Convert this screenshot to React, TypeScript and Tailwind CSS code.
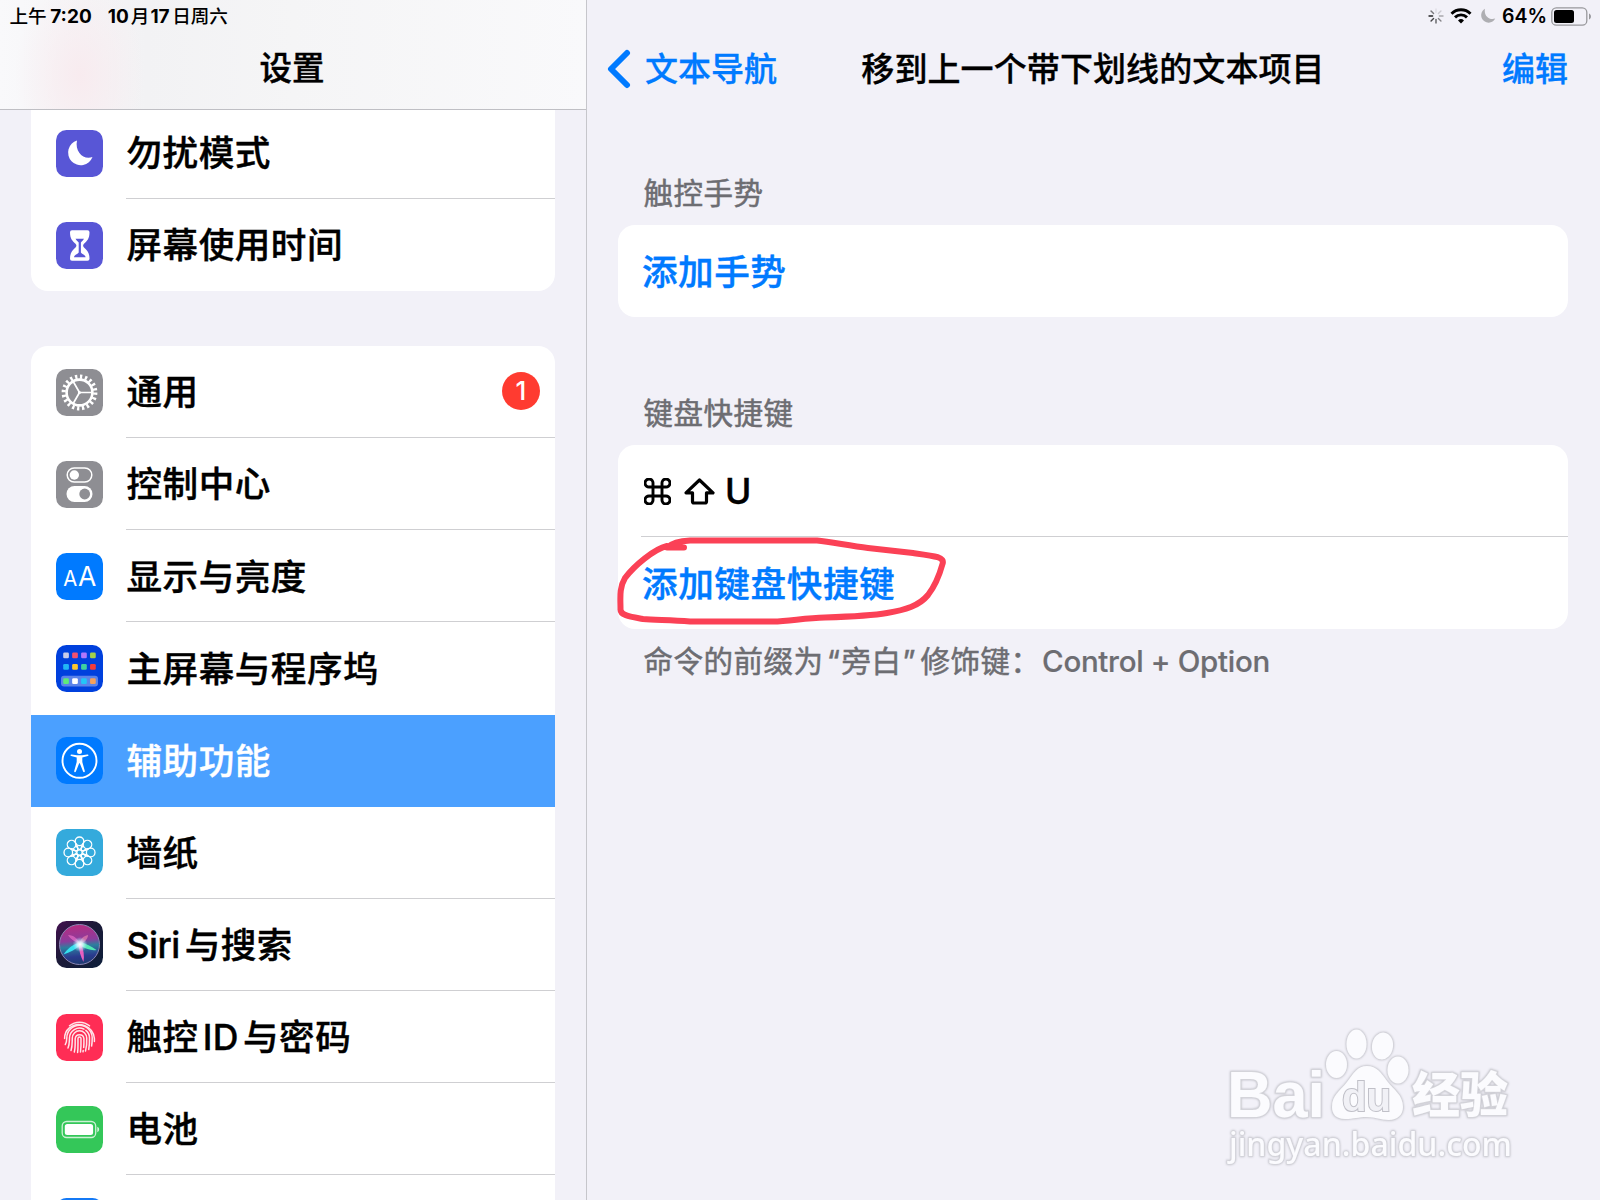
import type { ReactNode } from "react";

const PETALS = [0, 45, 90, 135, 180, 225, 270, 315];

function Tile({ color, children }: { color: string; children?: ReactNode }) {
  return (
    <svg viewBox="0 0 47 47" className="block size-[47px] shrink-0">
      <rect width="47" height="47" rx="10.5" fill={color} />
      {children}
    </svg>
  );
}

function MoonTile() {
  return (
    <Tile color="#5856d6">
      <path d="M21 10.5A12.6 12.6 0 1 0 36.5 27C28 30.500 18.500 22 21 10.500Z" fill="#fff" />
    </Tile>
  );
}

function HourglassTile() {
  return (
    <Tile color="#5856d6">
      <path
        d="M16 8.300h15.500a2 2 0 0 1 2 2c0 6.500-2.500 8.700-5.500 11.400-1.200 1.100-1.200 2.600 0 3.700 3 2.700 5.500 5 5.500 11.400a2 2 0 0 1-2 2H16a2 2 0 0 1-2-2c0-6.400 2.500-8.700 5.500-11.400 1.200-1.100 1.200-2.600 0-3.700-3-2.700-5.500-4.900-5.500-11.400a2 2 0 0 1 2-2Z"
        fill="#fff"
      />
      <path
        d="M19.500 16.800h8.500c-.8 1.600-2 2.600-3.100 3.600v10.200c1.100 2 4.400 1.800 4.700 4.600H18c.3-2.800 3.600-2.600 4.700-4.600V20.400c-1.200-1-2.400-2-3.200-3.600Z"
        fill="#5856d6"
      />
    </Tile>
  );
}

function GearTile() {
  return (
    <Tile color="#8e8e93">
      <g fill="none" stroke="#fff">
        <circle cx="23.500" cy="23.500" r="12.900" strokeWidth="2.600" />
        <circle cx="23.500" cy="23.500" r="15.800" strokeWidth="4.200" strokeDasharray="2.300 2.664" />
        <path d="M23.500 23.500h12.500M23.500 23.500l-6.300-11M23.500 23.500l-6.300 11" strokeWidth="1.700" />
      </g>
      <circle cx="23.500" cy="23.500" r="1.500" fill="#fff" />
    </Tile>
  );
}

function ControlTile() {
  return (
    <Tile color="#8e8e93">
      <rect x="11.200" y="7" width="24.600" height="14" rx="7" fill="none" stroke="#fff" strokeWidth="1.500" />
      <circle cx="18.300" cy="14" r="4.700" fill="#fff" />
      <rect x="10.500" y="25" width="26" height="16" rx="8" fill="#fff" />
      <circle cx="28.700" cy="33" r="5.400" fill="#8e8e93" />
    </Tile>
  );
}

function DisplayTile() {
  return (
    <Tile color="#007aff">
      <g fill="#fff" fontFamily="Inter, sans-serif" fontWeight="400">
        <text x="7.300" y="33" fontSize="21.500" textLength="14" lengthAdjust="spacingAndGlyphs">
          A
        </text>
        <text x="21.900" y="33" fontSize="27.500" textLength="18.300" lengthAdjust="spacingAndGlyphs">
          A
        </text>
      </g>
    </Tile>
  );
}

function HomeTile() {
  const rows = [
    { y: 7.5, c: ["#c9cbe8", "#f2506e", "#b176fb", "#a4d04a"] },
    { y: 19, c: ["#21b5f5", "#fdc72e", "#3fd0a0", "#f23b3b"] },
    { y: 33.3, c: ["#5eea78", "#ffffff", "#22c5f8", "#f5a05a"] },
  ];
  return (
    <Tile color="#0040dd">
      <rect x="5" y="30.800" width="37" height="10.800" rx="3" fill="#5b83ea" />
      {rows.map((r) =>
        r.c.map((c, i) => <rect key={c} x={7.200 + i * 8.950} y={r.y} width="5.700" height="5.700" rx="1.300" fill={c} />),
      )}
    </Tile>
  );
}

function AccessTile() {
  return (
    <Tile color="#007aff">
      <circle cx="23.500" cy="23.800" r="17" fill="none" stroke="#fff" strokeWidth="1.900" />
      <circle cx="23.500" cy="14.600" r="2.500" fill="#fff" />
      <path
        d="M15.500 17.500l5.500.8h5l5.500-.8c1.100-.1 1.400 1.300.3 1.600l-5.500 1.300v4.600l2.500 9c.3 1.200-1.200 1.700-1.700.5l-3.300-8.200h-.6l-3.300 8.200c-.5 1.200-2 .7-1.700-.5l2.500-9v-4.600l-5.500-1.300c-1.100-.3-.8-1.700.3-1.600Z"
        fill="#fff"
      />
    </Tile>
  );
}

function FlowerTile() {
  return (
    <Tile color="#34aadc">
      <g fill="none" stroke="#fff" strokeWidth="1.300">
        {PETALS.map((a) => (
          <g key={a} transform={`rotate(${a} 23.5 23.5)`}>
            <circle cx="23.500" cy="12.300" r="4.300" />
            <path d="M23.500 20.600C21 19.400 20 17.800 19.700 14.500M23.500 20.600C26 19.400 27 17.800 27.300 14.500" />
          </g>
        ))}
        <circle cx="23.500" cy="23.500" r="2.700" />
      </g>
    </Tile>
  );
}

function SiriTile() {
  return (
    <svg viewBox="0 0 47 47" className="block size-[47px] shrink-0">
      <defs>
        <linearGradient id="siriBg" x1="0" y1="0" x2="1" y2="1">
          <stop offset="0" stopColor="#43104f" />
          <stop offset=".45" stopColor="#1c1a38" />
          <stop offset="1" stopColor="#0d1f3a" />
        </linearGradient>
        <linearGradient id="siriOrb" x1=".4" y1="0" x2=".5" y2="1">
          <stop offset="0" stopColor="#b82c80" />
          <stop offset=".4" stopColor="#8b3c9c" />
          <stop offset=".55" stopColor="#2c7f9e" />
          <stop offset=".8" stopColor="#2a3a8e" />
          <stop offset="1" stopColor="#1c3a6e" />
        </linearGradient>
        <radialGradient id="siriCore">
          <stop offset="0" stopColor="#fff" />
          <stop offset=".4" stopColor="#e6f4ff" stopOpacity=".8" />
          <stop offset="1" stopColor="#9fe0ff" stopOpacity="0" />
        </radialGradient>
      </defs>
      <rect width="47" height="47" rx="10.500" fill="url(#siriBg)" />
      <circle cx="23.500" cy="23.500" r="20" fill="url(#siriOrb)" stroke="#8c86b4" strokeWidth="1" />
      <path d="M24 21.500C17 23 11 28 7.500 33.500c6-2 12-5 17.500-9.500Z" fill="#35e0ee" />
      <path d="M24 21c5 1.500 11 4 16.500 8-5 .8-12-1-16.500-5Z" fill="#52e8b4" />
      <path d="M23 23c-.5 6 1.500 12 4.500 18 1-7 0-13-2.500-18Z" fill="#e85fc0" />
      <path d="M24 23c-4-2-9-4-12-9 6 0 10 4 12 9Z" fill="#e86cc8" opacity=".7" />
      <path d="M24 23c0-5 3-8 8-9 0 4-4 8-8 9Z" fill="#f58ab0" opacity=".6" />
      <circle cx="24" cy="23.500" r="7.500" fill="url(#siriCore)" />
    </svg>
  );
}

function TouchTile() {
  return (
    <Tile color="#ff2d55">
      <g fill="none" stroke="#fff" strokeWidth="1.500" strokeLinecap="round" opacity=".88">
        <path d="M13.500 11.800a15.500 15.500 0 0 1 20 0" />
        <path d="M8.600 24.500c0-4.500 1.700-8 4.500-10.300a15.500 15.500 0 0 1 25.300 10.300v3" />
        <path d="M9.300 30.500c1.300-2 1.400-4 1.500-6.500a12.700 12.700 0 0 1 25.400 0c0 3 0 5-.6 8" />
        <path d="M12 34c1.600-3.500 1.300-6.500 1.500-10a10 10 0 0 1 14.500-8.800M29.800 16.400a10 10 0 0 1 3.700 8.100c.1 4-.1 7.500-.8 11" />
        <path d="M15 36.500c1.500-4.300 1.100-8 1.300-12.500a7.200 7.200 0 0 1 14.400 0c.2 4.500 0 9-1.200 13" />
        <path d="M18.300 38c1.200-4.500.8-9 .9-13.500a4.400 4.400 0 0 1 8.700 0c.1 3.500.1 6-.2 9M27.200 36.500l-.2 1.300" />
        <path d="M21.600 38.500c.6-4.500.3-9 .4-14a1.500 1.500 0 0 1 3 0c.1 4.500.1 9-.5 13.500" />
      </g>
    </Tile>
  );
}

function BatteryTile() {
  return (
    <Tile color="#34c759">
      <rect x="6.200" y="15.500" width="33.500" height="16" rx="4.500" fill="none" stroke="#fff" strokeOpacity=".75" strokeWidth="1.300" />
      <rect x="8.800" y="18" width="28.300" height="11" rx="2.500" fill="#fff" />
      <path d="M41.300 20.800c2.400.8 2.400 4.600 0 5.400Z" fill="#fff" fillOpacity=".8" />
    </Tile>
  );
}

function Row({
  icon,
  label,
  badge,
  active,
  line = true,
}: {
  icon: ReactNode;
  label: ReactNode;
  badge?: string;
  active?: boolean;
  line?: boolean;
}) {
  return (
    <div className={`flex h-[92.15px] shrink-0 items-center pl-[25px] ${active ? "bg-[#4ba0ff] text-white" : ""}`}>
      {icon}
      <div
        className={`ml-[23px] flex h-full flex-1 items-center justify-between border-b pr-[15px] ${
          line ? "border-[#cfcfd2]" : "border-transparent"
        }`}
      >
        <span className="pt-[3px] pl-[0.5px] text-[35.600px] leading-none font-medium tracking-[0.5px] [-webkit-text-stroke:0.4px]">
          {label}
        </span>
        {badge && (
          <span className="mb-px flex size-[38px] items-center justify-center rounded-full bg-[#ff3b30] text-[26px] leading-none font-medium text-white">
            {badge}
          </span>
        )}
      </div>
    </div>
  );
}

function Sidebar() {
  return (
    <aside className="flex h-full w-[587px] shrink-0 flex-col border-r border-[#c6c6cb]">
      <header className="flex h-[110px] shrink-0 flex-col border-b border-[#bfbfc4] bg-[radial-gradient(ellipse_65px_100px_at_80px_75px,#f8ebef_0%,rgba(248,235,239,0)_100%),linear-gradient(90deg,#f9f9fb_0%,#f2f2f4_25%,#f5f5f6_50%,#f9f9fb_100%)]">
        <div className="flex h-8 items-center pl-[9.500px] text-[18.600px] leading-none font-medium">
          <span>上午</span>
          <span className="ml-[3.500px] text-[19px] font-bold">7:20</span>
          <span className="ml-[16px] text-[19px] font-bold">10</span>
          <span className="ml-[2px]">月</span>
          <span className="ml-[1px] text-[19px] font-bold">17</span>
          <span className="ml-[2.500px]">日周六</span>
        </div>
        <h1 className="flex h-[74px] items-center justify-center pt-px pr-[2px] text-[32.500px] leading-none font-medium [-webkit-text-stroke:0.4px]">
          设置
        </h1>
      </header>
      <div className="flex min-h-0 flex-1 flex-col overflow-hidden pr-[31px] pl-[31px]">
        <div className="-mt-[3.500px] flex shrink-0 flex-col rounded-b-[17px] bg-white pt-[0.500px]">
          <Row icon={<MoonTile />} label="勿扰模式" />
          <Row icon={<HourglassTile />} label="屏幕使用时间" line={false} />
        </div>
        <div className="mt-[54.700px] flex shrink-0 flex-col overflow-hidden rounded-t-[17px] bg-white">
          <Row icon={<GearTile />} label="通用" badge="1" />
          <Row icon={<ControlTile />} label="控制中心" />
          <Row icon={<DisplayTile />} label="显示与亮度" />
          <Row icon={<HomeTile />} label="主屏幕与程序坞" line={false} />
          <Row icon={<AccessTile />} label="辅助功能" active line={false} />
          <Row icon={<FlowerTile />} label="墙纸" />
          <Row
            icon={<SiriTile />}
            label={
              <>
                <span className="tracking-[-0.5px]">Siri</span>
                <span className="ml-[5px]">与搜索</span>
              </>
            }
          />
          <Row
            icon={<TouchTile />}
            label={
              <>
                触控<span className="mx-1">ID</span>与密码
              </>
            }
          />
          <Row icon={<BatteryTile />} label="电池" />
          <Row icon={<Tile color="#1479f5" />} label="" />
        </div>
      </div>
    </aside>
  );
}

function StatusIcons() {
  return (
    <div className="flex h-8 items-center justify-end pr-[7px]">
      <svg viewBox="0 0 16 16" className="size-4" stroke="#000" strokeWidth="1.400" strokeLinecap="round">
        {[0.08, 0.16, 0.3, 0.45, 0.6, 0.7, 0.85, 0.5].map((o, i) => (
          <path key={o} d="M8 1v3.600" opacity={o} transform={`rotate(${i * 45} 8 8)`} />
        ))}
      </svg>
      <svg viewBox="0 0 22 16" className="ml-[6px] h-4 w-[22px]" fill="none" stroke="#000" strokeWidth="2.900">
        <path d="M1.500 5.700a13.500 13.500 0 0 1 19 0M5 9.400a8.500 8.500 0 0 1 12 0" />
        <path d="M11 15.600l-3-3.100a4.300 4.300 0 0 1 6 0Z" fill="#000" stroke="none" />
      </svg>
      <svg viewBox="0 0 16 16" className="ml-[8px] size-[16px]">
        <path d="M5 .8A7.400 7.400 0 1 0 15.200 10.600C9.500 12.600 3.500 8 5 .8Z" fill="#aeaeb2" />
      </svg>
      <span className="ml-[6px] w-[45px] pt-px text-[19.500px] leading-none font-semibold">64%</span>
      <svg viewBox="0 0 42 19" className="ml-[4px] h-[19px] w-[42px]">
        <rect x=".8" y=".8" width="35" height="17.400" rx="4.500" fill="none" stroke="#98989c" strokeWidth="1.300" />
        <rect x="3" y="3" width="20" height="13" rx="2.500" fill="#000" />
        <path d="M38 6.500c2.600.8 2.600 5.200 0 6Z" fill="#98989c" />
      </svg>
    </div>
  );
}

function Watermark() {
  return (
    <svg viewBox="0 0 310 150" className="absolute top-[1020px] left-[1220px] h-[150px] w-[310px] drop-shadow-[0_0_1px_#b8b8c0]">
      <g fill="#fbfbfe" stroke="#d4d4da" strokeWidth="1.200" style={{ paintOrder: "stroke" }}>
        <ellipse cx="116.500" cy="44.500" rx="10.500" ry="13.500" />
        <ellipse cx="136.500" cy="24" rx="10" ry="14.500" />
        <ellipse cx="162.500" cy="26" rx="10.500" ry="13.500" transform="rotate(8 162.500 26)" />
        <ellipse cx="178" cy="50" rx="10.500" ry="13.500" />
        <path d="M147 46c10 0 14 7 20 15 7 9 16 14 16 26 0 8-6 13-14 13-9 0-13-3-22-3s-13 2-22 2c-9 0-13-5-13-12 0-12 8-16 15-25 7-9 10-16 20-16Z" />
        <g fontFamily="'Liberation Sans', sans-serif" fontWeight="700">
          <text x="7" y="97" fontSize="64" textLength="98" lengthAdjust="spacingAndGlyphs" strokeWidth="2">
            Bai
          </text>
          <text x="122" y="91" fontSize="40" textLength="49" lengthAdjust="spacingAndGlyphs" fill="#f1f1f6" stroke="#c0c0c8" strokeWidth="2">
            du
          </text>
        </g>
        <text x="192" y="92" fontSize="48" textLength="96" fontFamily="'Noto Sans CJK SC', sans-serif" fontWeight="900" strokeWidth="2">
          经验
        </text>
        <text x="9" y="135.500" fontSize="33" textLength="283" lengthAdjust="spacingAndGlyphs" fontFamily="'Noto Sans', sans-serif" fontWeight="500" strokeWidth="1.500">
          jingyan.baidu.com
        </text>
      </g>
    </svg>
  );
}

function Detail() {
  return (
    <main className="flex h-full min-w-0 flex-1 flex-col">
      <StatusIcons />
      <nav className="flex h-[74px] items-center pr-[32px] pl-[20px] text-[33px] leading-none font-medium [-webkit-text-stroke:0.3px]">
        <div className="flex flex-1 items-center text-[#007aff]">
          <svg viewBox="0 0 24 40" className="mr-[14px] h-10 w-6" fill="none" stroke="#007aff" strokeWidth="6" strokeLinecap="round" strokeLinejoin="round">
            <path d="M20 4L4 20l16 16" />
          </svg>
          文本导航
        </div>
        <h2 className="ml-[11px] tracking-[0.1px]">移到上一个带下划线的文本项目</h2>
        <div className="flex flex-1 justify-end text-[#007aff]">编辑</div>
      </nav>
      <section className="flex flex-col pr-8 pl-[31px] text-[#6d6d72]">
        <h3 className="mt-[71px] pl-[25.500px] text-[29.500px] leading-[32px] tracking-[0.500px] [-webkit-text-stroke:0.500px]">触控手势</h3>
        <div className="mt-[16px] flex h-[92px] items-center rounded-[17px] bg-white pt-[4px] pl-[24px] text-[35.600px] leading-none font-medium tracking-[0.500px] text-[#007aff] [-webkit-text-stroke:0.400px]">
          添加手势
        </div>
        <h3 className="mt-[80px] pl-[25.500px] text-[29.500px] leading-[32px] tracking-[0.500px] [-webkit-text-stroke:0.500px]">键盘快捷键</h3>
        <div className="mt-[16px] flex h-[184px] flex-col rounded-[17px] bg-white pl-[23px]">
          <div className="flex h-[92px] items-center border-b border-[#cfcfd2] pt-[2px] pl-[3px] text-[35.600px] leading-none font-medium text-black">
            <svg viewBox="0 0 27 27" className="size-[27px]" fill="none" stroke="#000" strokeWidth="2.900">
              <path d="M9 9H5.500A4 4 0 1 1 9 5.500v16A4 4 0 1 1 5.500 18h16A4 4 0 1 1 18 21.500v-16A4 4 0 1 1 21.500 9Z" />
            </svg>
            <svg viewBox="0 0 31 27" className="ml-[13px] h-[27px] w-[31px]" fill="none" stroke="#000" strokeWidth="3.200" strokeLinejoin="round">
              <path d="M15.500 2L29 14.800h-6.500v8.700q0 1.500-1.500 1.500H10q-1.500 0-1.500-1.500v-8.700H2Z" />
            </svg>
            <span className="ml-[10px] pt-px [-webkit-text-stroke:0.500px]">U</span>
          </div>
          <div className="flex flex-1 items-center pt-[3px] pl-px text-[35.600px] leading-none font-medium tracking-[0.600px] text-[#007aff] [-webkit-text-stroke:0.400px]">
            添加键盘快捷键
          </div>
        </div>
        <p className="mt-[16px] flex pl-[25.500px] text-[29.500px] leading-[32px] tracking-[0.500px] [-webkit-text-stroke:0.500px]">
          <span>命令的前缀为</span>
          <span className="w-[17px] text-right">“</span>
          <span className="ml-px">旁白</span>
          <span className="w-[19px] pl-px">”</span>
          <span>修饰键：</span>
          <span className="ml-[1.500px] font-medium tracking-[-0.300px] [-webkit-text-stroke:0.200px]">Control + Option</span>
        </p>
      </section>
    </main>
  );
}

export default function App() {
  return (
    <div className="relative flex h-[1200px] w-[1600px] overflow-hidden bg-[#f2f1f8] font-['Inter','Noto_Sans_CJK_SC',sans-serif] text-black">
      <Sidebar />
      <Detail />
      <svg viewBox="0 0 340 100" className="absolute top-[530px] left-[610px] h-[100px] w-[340px]" fill="none" stroke="#fb4156" strokeWidth="6" strokeLinecap="round" strokeLinejoin="round">
        <path d="M74 17.500H57C61 14 70 11 80 10.500H207C222 12 240 16 258 18L303 23C325 26 335 27 332.500 34C330 43 325 56 318 65C309 76 295 80 277 83C260 86 230 87 215 87.500C195 88 180 91 163 91.500H80C60 90 45 90 33 89C22 87 10 86 10.500 79C10.500 68 9 58 15 48C24 36 44 19 57 16" />
      </svg>
      <Watermark />
    </div>
  );
}
